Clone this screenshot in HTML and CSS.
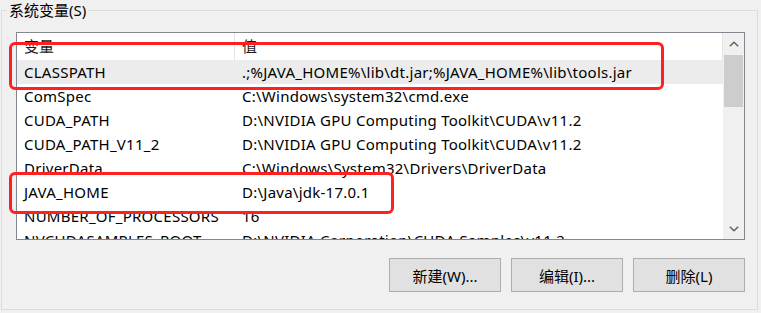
FILE: index.html
```html
<!DOCTYPE html>
<html lang="zh-CN">
<head>
<meta charset="utf-8">
<title>系统变量</title>
<link rel="stylesheet" href="styles.css">
</head>
<body>
<fieldset class="group">
  <legend class="group-title">系统变量(S)</legend>
  <div class="content">
    <div class="list">
      <div class="rows">
        <div class="row header">
          <div class="cell name">变量</div>
          <div class="cell value">值</div>
        </div>
        <div class="row selected">
          <div class="cell name">CLASSPATH</div>
          <div class="cell value">.;%JAVA_HOME%\lib\dt.jar;%JAVA_HOME%\lib\tools.jar</div>
        </div>
        <div class="row">
          <div class="cell name">ComSpec</div>
          <div class="cell value">C:\Windows\system32\cmd.exe</div>
        </div>
        <div class="row">
          <div class="cell name">CUDA_PATH</div>
          <div class="cell value">D:\NVIDIA GPU Computing Toolkit\CUDA\v11.2</div>
        </div>
        <div class="row">
          <div class="cell name">CUDA_PATH_V11_2</div>
          <div class="cell value">D:\NVIDIA GPU Computing Toolkit\CUDA\v11.2</div>
        </div>
        <div class="row">
          <div class="cell name">DriverData</div>
          <div class="cell value">C:\Windows\System32\Drivers\DriverData</div>
        </div>
        <div class="row">
          <div class="cell name">JAVA_HOME</div>
          <div class="cell value">D:\Java\jdk-17.0.1</div>
        </div>
        <div class="row">
          <div class="cell name">NUMBER_OF_PROCESSORS</div>
          <div class="cell value">16</div>
        </div>
        <div class="row">
          <div class="cell name">NVCUDASAMPLES_ROOT</div>
          <div class="cell value">D:\NVIDIA Corporation\CUDA Samples\v11.2</div>
        </div>
      </div>
      <div class="scrollbar">
        <div class="sb-btn">
          <svg width="10" height="6" viewBox="0 0 10 6"><polyline points="0.8,5.3 5,1.2 9.2,5.3" fill="none" stroke="#606060" stroke-width="1.4"/></svg>
        </div>
        <div class="sb-track"><div class="sb-thumb"></div></div>
        <div class="sb-btn">
          <svg width="10" height="6" viewBox="0 0 10 6"><polyline points="0.8,0.7 5,4.8 9.2,0.7" fill="none" stroke="#606060" stroke-width="1.4"/></svg>
        </div>
      </div>
    </div>
    <div class="buttons">
      <button class="btn">新建(W)...</button>
      <button class="btn">编辑(I)...</button>
      <button class="btn">删除(L)</button>
    </div>
  </div>
</fieldset>
<div class="mark mark-classpath"></div>
<div class="mark mark-javahome"></div>
</body>
</html>
```
FILE: styles.css
```css
html, body {
  margin: 0;
  padding: 0;
}
body {
  position: relative;
  width: 761px;
  height: 313px;
  overflow: hidden;
  background: #f0f0f0;
  color: #000;
  font-family: "Noto Sans", "Noto Sans CJK SC", sans-serif;
  font-size: 15px;
}
.group {
  margin: 1px 3px 0 1px;
  padding: 13px 12px 17px 5px;
  border: 1px solid #dcdcdc;
  min-width: 0;
}
.group-title {
  padding: 0 2px;
  line-height: 18px;
  font-size: 15px;
}
.content {
  margin-left: 9px;
}
.list {
  display: flex;
  height: 206px;
  border: 1px solid #828790;
  background: #fff;
}
.rows {
  flex: 1;
  min-width: 0;
  overflow: hidden;
}
.row {
  display: grid;
  grid-template-columns: 218px 1fr;
  height: 24px;
  line-height: 24px;
  white-space: nowrap;
  letter-spacing: 0.25px;
}
.row.header {
  height: 27px;
  line-height: 26px;
  color: #1a1a1a;
  letter-spacing: 0;
}
.row.header .name {
  border-right: 1px solid #e5e5e5;
}
.row.header .value {
  border-right: 1px solid #e5e5e5;
}
.row.selected {
  background: #ececec;
}
.cell {
  padding-left: 7px;
  overflow: hidden;
}
.scrollbar {
  width: 21px;
  display: flex;
  flex-direction: column;
  background: #f0f0f0;
}
.sb-btn {
  height: 21px;
  display: flex;
  align-items: center;
  justify-content: center;
}
.sb-track {
  flex: 1;
  padding: 1px 1px 0 1px;
}
.sb-thumb {
  height: 52px;
  background: #cdcdcd;
}
.buttons {
  display: flex;
  justify-content: flex-end;
  gap: 10px;
  margin-top: 18px;
}
.btn {
  width: 112px;
  height: 34px;
  margin: 0;
  padding: 0;
  background: #e1e1e1;
  border: 1px solid #adadad;
  border-radius: 0;
  font-family: "Noto Sans", "Noto Sans CJK SC", sans-serif;
  font-size: 15px;
  color: #000;
}
.mark {
  position: absolute;
  border: 3px solid #ff2020;
  border-radius: 6px;
  box-sizing: border-box;
}
.mark-classpath {
  left: 9px;
  top: 42px;
  width: 655px;
  height: 48px;
}
.mark-javahome {
  left: 9px;
  top: 172px;
  width: 385px;
  height: 42px;
}
```
